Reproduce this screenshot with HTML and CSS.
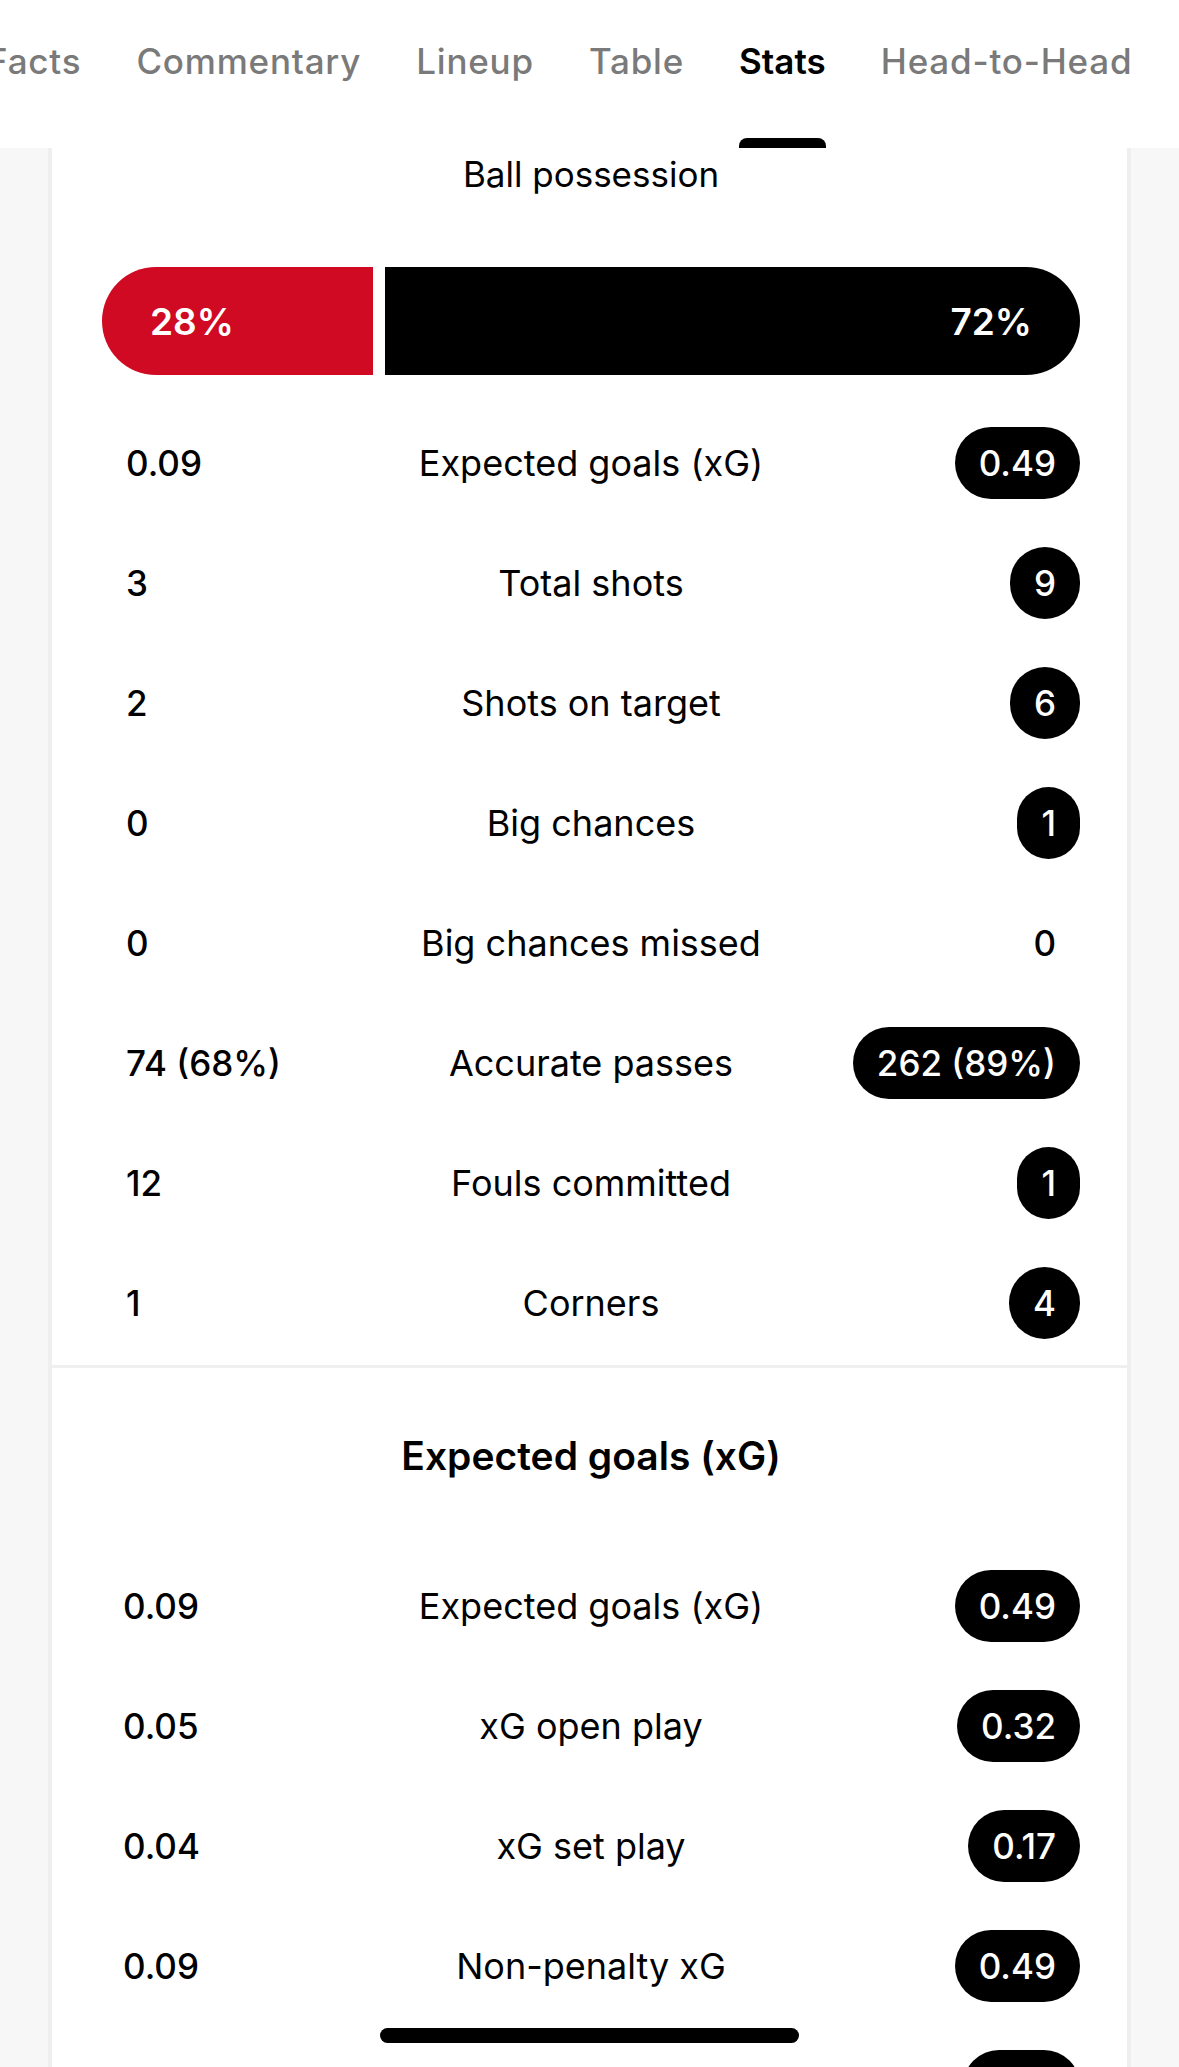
FILE: index.html
```html
<!DOCTYPE html>
<html lang="en">
<head>
<meta charset="utf-8">
<title>Stats</title>
<link rel="stylesheet" href="styles.css">
</head>
<body>
<header class="tabbar">
  <nav class="tabs">
    <span class="tab">Facts</span>
    <span class="tab">Commentary</span>
    <span class="tab">Lineup</span>
    <span class="tab">Table</span>
    <span class="tab tab-active">Stats</span>
    <span class="tab">Head-to-Head</span>
  </nav>
</header>

<main class="card">
  <section class="section">
    <h2 class="section-title">Ball possession</h2>
    <div class="possession">
      <div class="poss poss-home" style="flex: 0 1 28%">28%</div>
      <div class="poss poss-away" style="flex: 0 1 72%">72%</div>
    </div>
    <div class="rows">
      <div class="row"><span class="home">0.09</span><span class="label">Expected goals (xG)</span><span class="away"><span class="val hl">0.49</span></span></div>
      <div class="row"><span class="home">3</span><span class="label">Total shots</span><span class="away"><span class="val hl">9</span></span></div>
      <div class="row"><span class="home">2</span><span class="label">Shots on target</span><span class="away"><span class="val hl">6</span></span></div>
      <div class="row"><span class="home">0</span><span class="label">Big chances</span><span class="away"><span class="val hl">1</span></span></div>
      <div class="row"><span class="home">0</span><span class="label">Big chances missed</span><span class="away"><span class="val">0</span></span></div>
      <div class="row"><span class="home">74 (68%)</span><span class="label">Accurate passes</span><span class="away"><span class="val hl">262 (89%)</span></span></div>
      <div class="row"><span class="home">12</span><span class="label">Fouls committed</span><span class="away"><span class="val hl">1</span></span></div>
      <div class="row"><span class="home">1</span><span class="label">Corners</span><span class="away"><span class="val hl">4</span></span></div>
    </div>
  </section>

  <section class="section section-xg">
    <h2 class="section-heading">Expected goals (xG)</h2>
    <div class="rows rows-xg">
      <div class="row"><span class="home">0.09</span><span class="label">Expected goals (xG)</span><span class="away"><span class="val hl">0.49</span></span></div>
      <div class="row"><span class="home">0.05</span><span class="label">xG open play</span><span class="away"><span class="val hl">0.32</span></span></div>
      <div class="row"><span class="home">0.04</span><span class="label">xG set play</span><span class="away"><span class="val hl">0.17</span></span></div>
      <div class="row"><span class="home">0.09</span><span class="label">Non-penalty xG</span><span class="away"><span class="val hl">0.49</span></span></div>
      <div class="row"><span class="home">0.05</span><span class="label">xG on target (xGOT)</span><span class="away"><span class="val hl">0.41</span></span></div>
    </div>
  </section>
</main>

<div class="home-indicator"></div>
</body>
</html>
```

FILE: styles.css
```css
* { box-sizing: border-box; }

html, body {
  margin: 0;
  padding: 0;
}

body {
  background: #f7f7f7;
  font-family: Inter, "Noto Sans", "Liberation Sans", sans-serif;
  color: #000;
  overflow: hidden;
  height: 2067px;
}

.tabbar {
  background: #fff;
  height: 148px;
  overflow: hidden;
  position: relative;
  z-index: 2;
}

.tabs {
  display: flex;
  gap: 55px;
  margin-left: -13px;
  height: 148px;
  white-space: nowrap;
}

.tab {
  font-size: 35px;
  font-weight: 500;
  letter-spacing: 0.8px;
  color: #7a7a7a;
  padding-top: 41px;
  line-height: 40px;
  position: relative;
  height: 148px;
}

.tab-active {
  color: #000;
  font-weight: 600;
  letter-spacing: 0;
}

.tab-active::after {
  content: "";
  position: absolute;
  left: 0;
  right: 0;
  bottom: 0;
  height: 10px;
  background: #000;
  border-radius: 8px 8px 0 0;
}

.card {
  margin: 0 48px;
  background: #fff;
  border-left: 4px solid #efefef;
  border-right: 4px solid #efefef;
}

.section {
  padding: 0 47px 0 50px;
}

.section-xg {
  border-top: 3px solid #efefef;
}

.section-title {
  margin: 0;
  font-size: 35px;
  font-weight: 400;
  text-align: center;
  line-height: 40px;
  padding-top: 6px;
}

.possession {
  display: flex;
  gap: 12px;
  height: 108px;
  margin-top: 73px;
}

.poss {
  display: flex;
  align-items: center;
  min-width: 0;
  color: #fff;
  font-size: 37px;
  font-weight: 600;
  padding: 0 48px;
}

.poss-home {
  background: #d00a23;
  border-radius: 54px 0 0 54px;
}

.poss-away {
  background: #000;
  border-radius: 0 54px 54px 0;
  justify-content: flex-end;
}

.rows {
  padding-top: 28px;
  padding-bottom: 2px;
}

.row {
  display: grid;
  grid-template-columns: 1fr auto 1fr;
  align-items: center;
  height: 120px;
  font-size: 35px;
}

.home {
  padding-left: 24px;
  font-weight: 500;
}

.rows-xg .home {
  padding-left: 21px;
}

.label {
  text-align: center;
  font-weight: 400;
  font-size: 36px;
}

.away {
  display: flex;
  justify-content: flex-end;
}

.val {
  display: flex;
  align-items: center;
  height: 72px;
  padding: 0 24px;
  border-radius: 36px;
  font-weight: 500;
}

.val.hl {
  background: #000;
  color: #fff;
}

.section-heading {
  margin: 0;
  text-align: center;
  font-size: 39px;
  font-weight: 600;
  line-height: 40px;
  padding-top: 68px;
  padding-bottom: 70px;
}

.rows-xg {
  padding-top: 0;
}

.home-indicator {
  position: fixed;
  left: 380px;
  top: 2028px;
  width: 419px;
  height: 15px;
  border-radius: 8px;
  background: #000;
  z-index: 3;
}
```
